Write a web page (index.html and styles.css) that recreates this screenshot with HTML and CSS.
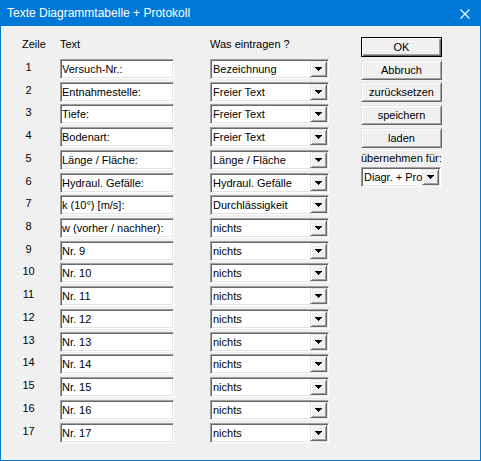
FILE: index.html
```html
<!DOCTYPE html>
<html>
<head>
<meta charset="utf-8">
<link rel="stylesheet" href="styles.css">
</head>
<body>
<div class="window">
  <div class="titlebar">
    <span class="title">Texte Diagrammtabelle + Protokoll</span>
    <svg class="close" width="10" height="10" viewBox="0 0 10 10"><path d="M0.5 0.5L9.5 9.5M9.5 0.5L0.5 9.5" stroke="#fff" stroke-width="1.1" fill="none"/></svg>
  </div>
  <div class="client">
    <div class="table">
      <div class="head">
        <span>Zeile</span><span>Text</span><span>Was eintragen ?</span>
      </div>
      <div class="rows">
        <div class="num">1</div><div class="field">Versuch-Nr.:</div><div class="combo"><span class="val">Bezeichnung</span><span class="arrow"><svg width="7" height="4" viewBox="0 0 7 4"><polygon points="0,0 7,0 3.5,4" fill="#000"/></svg></span></div>
        <div class="num">2</div><div class="field">Entnahmestelle:</div><div class="combo"><span class="val">Freier Text</span><span class="arrow"><svg width="7" height="4" viewBox="0 0 7 4"><polygon points="0,0 7,0 3.5,4" fill="#000"/></svg></span></div>
        <div class="num">3</div><div class="field">Tiefe:</div><div class="combo"><span class="val">Freier Text</span><span class="arrow"><svg width="7" height="4" viewBox="0 0 7 4"><polygon points="0,0 7,0 3.5,4" fill="#000"/></svg></span></div>
        <div class="num">4</div><div class="field">Bodenart:</div><div class="combo"><span class="val">Freier Text</span><span class="arrow"><svg width="7" height="4" viewBox="0 0 7 4"><polygon points="0,0 7,0 3.5,4" fill="#000"/></svg></span></div>
        <div class="num">5</div><div class="field">Länge / Fläche:</div><div class="combo"><span class="val">Länge / Fläche</span><span class="arrow"><svg width="7" height="4" viewBox="0 0 7 4"><polygon points="0,0 7,0 3.5,4" fill="#000"/></svg></span></div>
        <div class="num">6</div><div class="field">Hydraul. Gefälle:</div><div class="combo"><span class="val">Hydraul. Gefälle</span><span class="arrow"><svg width="7" height="4" viewBox="0 0 7 4"><polygon points="0,0 7,0 3.5,4" fill="#000"/></svg></span></div>
        <div class="num">7</div><div class="field">k (10°) [m/s]:</div><div class="combo"><span class="val">Durchlässigkeit</span><span class="arrow"><svg width="7" height="4" viewBox="0 0 7 4"><polygon points="0,0 7,0 3.5,4" fill="#000"/></svg></span></div>
        <div class="num">8</div><div class="field">w (vorher / nachher):</div><div class="combo"><span class="val">nichts</span><span class="arrow"><svg width="7" height="4" viewBox="0 0 7 4"><polygon points="0,0 7,0 3.5,4" fill="#000"/></svg></span></div>
        <div class="num">9</div><div class="field">Nr. 9</div><div class="combo"><span class="val">nichts</span><span class="arrow"><svg width="7" height="4" viewBox="0 0 7 4"><polygon points="0,0 7,0 3.5,4" fill="#000"/></svg></span></div>
        <div class="num">10</div><div class="field">Nr. 10</div><div class="combo"><span class="val">nichts</span><span class="arrow"><svg width="7" height="4" viewBox="0 0 7 4"><polygon points="0,0 7,0 3.5,4" fill="#000"/></svg></span></div>
        <div class="num">11</div><div class="field">Nr. 11</div><div class="combo"><span class="val">nichts</span><span class="arrow"><svg width="7" height="4" viewBox="0 0 7 4"><polygon points="0,0 7,0 3.5,4" fill="#000"/></svg></span></div>
        <div class="num">12</div><div class="field">Nr. 12</div><div class="combo"><span class="val">nichts</span><span class="arrow"><svg width="7" height="4" viewBox="0 0 7 4"><polygon points="0,0 7,0 3.5,4" fill="#000"/></svg></span></div>
        <div class="num">13</div><div class="field">Nr. 13</div><div class="combo"><span class="val">nichts</span><span class="arrow"><svg width="7" height="4" viewBox="0 0 7 4"><polygon points="0,0 7,0 3.5,4" fill="#000"/></svg></span></div>
        <div class="num">14</div><div class="field">Nr. 14</div><div class="combo"><span class="val">nichts</span><span class="arrow"><svg width="7" height="4" viewBox="0 0 7 4"><polygon points="0,0 7,0 3.5,4" fill="#000"/></svg></span></div>
        <div class="num">15</div><div class="field">Nr. 15</div><div class="combo"><span class="val">nichts</span><span class="arrow"><svg width="7" height="4" viewBox="0 0 7 4"><polygon points="0,0 7,0 3.5,4" fill="#000"/></svg></span></div>
        <div class="num">16</div><div class="field">Nr. 16</div><div class="combo"><span class="val">nichts</span><span class="arrow"><svg width="7" height="4" viewBox="0 0 7 4"><polygon points="0,0 7,0 3.5,4" fill="#000"/></svg></span></div>
        <div class="num">17</div><div class="field">Nr. 17</div><div class="combo"><span class="val">nichts</span><span class="arrow"><svg width="7" height="4" viewBox="0 0 7 4"><polygon points="0,0 7,0 3.5,4" fill="#000"/></svg></span></div>
      </div>
    </div>
    <div class="side">
      <div class="btn default">OK</div>
      <div class="btn">Abbruch</div>
      <div class="btn">zurücksetzen</div>
      <div class="btn">speichern</div>
      <div class="btn">laden</div>
      <div class="label">übernehmen für:</div>
      <div class="combo small"><span class="val">Diagr. + Pro</span><span class="arrow"><svg width="7" height="4" viewBox="0 0 7 4"><polygon points="0,0 7,0 3.5,4" fill="#000"/></svg></span></div>
    </div>
  </div>
</div>
</body>
</html>
```
FILE: styles.css
```css
html, body {
  margin: 0;
  padding: 0;
  background: #f0f0f0;
}
body {
  font-family: "Liberation Sans", Arial, sans-serif;
  font-size: 11px;
  color: #000;
}
.window {
  width: 481px;
  height: 461px;
  box-sizing: border-box;
  border: 1px solid #0078d7;
  border-top: 0;
  background: #f0f0f0;
  display: flex;
  flex-direction: column;
}
.titlebar {
  height: 26px;
  background: #0078d7;
  color: #fff;
  display: flex;
  align-items: center;
  padding-left: 6px;
}
.title {
  flex: 1;
  font-size: 12px;
  white-space: nowrap;
}
.close {
  display: block;
  margin-right: 10px;
  margin-top: 1px;
}
.client {
  display: flex;
  align-items: flex-start;
  padding: 11px 0 0 21px;
}
.head {
  display: grid;
  grid-template-columns: 38px 150px 119px;
  height: 14px;
  line-height: 14px;
  margin-bottom: 8px;
}
.rows {
  display: grid;
  grid-template-columns: 38px 150px 119px;
  grid-auto-rows: 20px;
  row-gap: 2.73px;
}
.num {
  width: 13px;
  text-align: center;
  line-height: 17px;
}
.field {
  width: 114px;
  height: 20px;
  box-sizing: border-box;
  background: #fff;
  border: 1px solid;
  border-color: #a0a0a0 #fff #fff #a0a0a0;
  box-shadow: inset 1px 1px #696969, inset -1px -1px #e3e3e3;
  padding: 0 1px 0 1px;
  line-height: 18px;
  white-space: nowrap;
  overflow: hidden;
}
.combo {
  display: flex;
  height: 20px;
  box-sizing: border-box;
  background: #fff;
  border: 1px solid;
  border-color: #a0a0a0 #fff #fff #a0a0a0;
  box-shadow: inset 1px 1px #696969, inset -1px -1px #e3e3e3;
  padding: 1px;
}
.val {
  flex: 1;
  padding-left: 1px;
  line-height: 16px;
  white-space: nowrap;
  overflow: hidden;
}
.arrow {
  width: 17px;
  height: 16px;
  box-sizing: border-box;
  background: #f0f0f0;
  border: 1px solid;
  border-color: #e3e3e3 #696969 #696969 #e3e3e3;
  box-shadow: inset 1px 1px #fff, inset -1px -1px #a0a0a0;
  display: flex;
  align-items: center;
  justify-content: center;
}
.arrow svg {
  display: block;
  shape-rendering: crispEdges;
}
.side {
  width: 81px;
  margin-left: 32px;
  display: flex;
  flex-direction: column;
  gap: 2.73px;
}
.btn {
  height: 20px;
  box-sizing: border-box;
  background: #f0f0f0;
  border: 1px solid;
  border-color: #e3e3e3 #696969 #696969 #e3e3e3;
  box-shadow: inset 1px 1px #fff, inset -1px -1px #a0a0a0;
  line-height: 18px;
  text-align: center;
  white-space: nowrap;
}
.btn.default {
  border: 1px solid #000;
  box-shadow: inset 1px 1px #fff, inset -1px -1px #696969, inset -2px -2px #a0a0a0;
}
.label {
  line-height: 14px;
  white-space: nowrap;
}
.combo.small {
  width: 80px;
}
```
